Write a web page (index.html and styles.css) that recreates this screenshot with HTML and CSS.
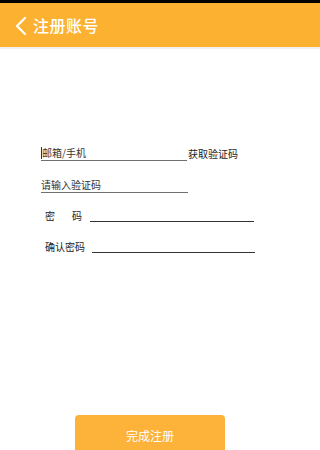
FILE: index.html
```html
<!DOCTYPE html>
<html lang="zh">
<head>
<meta charset="utf-8">
<link rel="stylesheet" href="styles.css">
</head>
<body>
<div class="statusbar"></div>
<header class="topbar">
  <svg class="back" width="14" height="20" viewBox="0 0 14 20"><polyline points="11,2 3,10 11,18" fill="none" stroke="#fff" stroke-width="2.2" stroke-linecap="round" stroke-linejoin="round"/></svg>
  <span class="title">注册账号</span>
</header>
<main class="form">
  <div class="row row-account">
    <div class="field field-account"><span class="caret"></span><span class="hint">邮箱/手机</span></div>
    <span class="getcode">获取验证码</span>
  </div>
  <div class="row row-code">
    <div class="field field-code"><span class="hint">请输入验证码</span></div>
  </div>
  <div class="row row-pwd">
    <span class="label label-spread"><span>密</span><span>码</span></span>
    <div class="line"></div>
  </div>
  <div class="row row-confirm">
    <span class="label">确认密码</span>
    <div class="line"></div>
  </div>
  <button class="submit">完成注册</button>
</main>
</body>
</html>
```
FILE: styles.css
```css
html, body {
  margin: 0;
  padding: 0;
  background: #fff;
  font-family: "Noto Sans CJK SC", "Noto Sans", sans-serif;
}
.statusbar {
  height: 3px;
  background: #000;
}
.topbar {
  height: 44px;
  background: #fcb131;
  border-bottom: 2px solid #f0f0f0;
  display: flex;
  align-items: center;
  padding-left: 14px;
}
.back {
  display: block;
  margin-top: 1px;
}
.title {
  color: #fff;
  font-size: 16px;
  font-weight: 500;
  margin-left: 5px;
  letter-spacing: 0.5px;
}
.form {
  padding-left: 41px;
  display: flex;
  flex-direction: column;
  align-items: flex-start;
}
.row {
  display: flex;
  align-items: flex-end;
  font-size: 10px;
  color: #222;
}
.row-account { margin-top: 97px; }
.row-code { margin-top: 16px; }
.row-pwd { margin-top: 17px; padding-left: 4px; }
.row-confirm { margin-top: 19px; padding-left: 4px; }
.field {
  height: 14px;
  border-bottom: 1.5px solid #6f6f6f;
  display: flex;
  align-items: center;
  line-height: 12px;
}
.field-account { width: 146px; }
.field-code { width: 147px; height: 15px; }
.caret {
  width: 1px;
  height: 12px;
  background: #333;
}
.hint {
  color: #333;
}
.getcode {
  line-height: 12px;
  padding-bottom: 1px;
  margin-left: 1px;
  color: #222;
}
.label {
  line-height: 12px;
  width: 45px;
  flex: none;
}
.label-spread {
  display: flex;
  justify-content: space-between;
  width: 37px;
  margin-right: 8px;
}
.row-confirm .label { width: 47px; }
.line {
  width: 164px;
  height: 1px;
  background: #333;
}
.row-confirm .line { width: 163px; }
.submit {
  margin-top: 162px;
  margin-left: 34px;
  width: 150px;
  height: 40px;
  border: none;
  border-radius: 4px;
  background: #fdb23a;
  color: #fff;
  font-family: "Noto Sans CJK SC", "Noto Sans", sans-serif;
  font-size: 12px;
  padding: 0;
}
```
